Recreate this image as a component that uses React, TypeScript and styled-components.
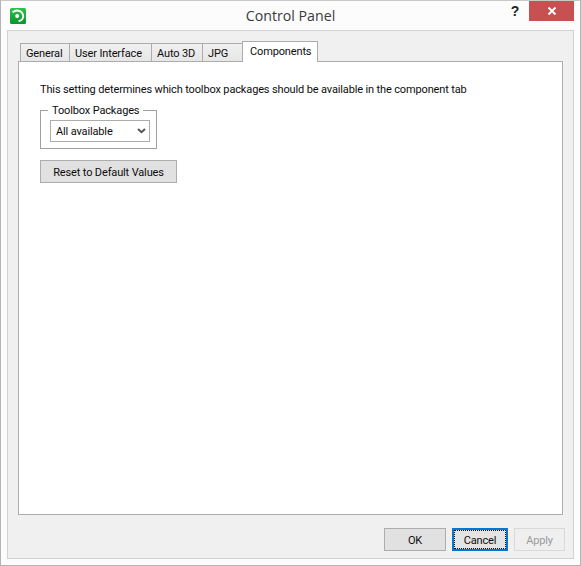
import React from 'react';
import styled, { createGlobalStyle } from 'styled-components';

const GlobalStyle = createGlobalStyle`
  html, body {
    margin: 0;
    padding: 0;
    background: #fcfcfc;
  }
  * {
    box-sizing: border-box;
  }
`;

const WindowFrame = styled.div`
  width: 581px;
  height: 566px;
  display: flex;
  flex-direction: column;
  background: #fcfcfc;
  border: 1px solid #b4b4b4;
  border-top-color: #c8c8c8;
  font-family: Roboto, "Open Sans", sans-serif;
  font-size: 11px;
  letter-spacing: -0.14px;
  color: #0d0d0d;
  overflow: hidden;
`;

const TitleBar = styled.div`
  height: 29px;
  flex: none;
  display: flex;
  align-items: flex-start;
  padding-left: 9px;
`;

const AppIcon = styled.svg`
  width: 16px;
  height: 16px;
  margin-top: 7px;
  flex: none;
`;

const Title = styled.div`
  flex: 1;
  text-align: center;
  font-family: "Open Sans", sans-serif;
  font-size: 14.2px;
  letter-spacing: 0;
  line-height: 20px;
  margin-top: 5px;
  padding-left: 48px;
  color: #3a3a3a;
`;

const HelpButton = styled.div`
  width: 16px;
  margin-right: 6px;
  margin-top: 1px;
  text-align: center;
  font-family: "Liberation Sans", sans-serif;
  font-weight: bold;
  font-size: 14px;
  line-height: 18px;
  color: #222;
`;

const CloseButton = styled.div`
  width: 45px;
  height: 20px;
  margin-right: 6px;
  background: #c75050;
  display: flex;
  align-items: center;
  justify-content: center;
`;

const Client = styled.div`
  flex: 1;
  margin: 0 6px 6px;
  background: #f0f0f0;
  border: 1px solid #d2d2d2;
  display: flex;
  flex-direction: column;
  padding: 8px 10px 0;
`;

const TabStrip = styled.div`
  display: flex;
  align-items: flex-end;
  height: 22px;
  padding-left: 3px;
  position: relative;
  z-index: 1;
`;

const Tab = styled.div<{ $width: number; $active?: boolean }>`
  width: ${p => p.$width}px;
  height: ${p => (p.$active ? 21 : 19)}px;
  margin-left: -1px;
  margin-bottom: -1px;
  display: flex;
  align-items: flex-start;
  padding: 1px 0 0 ${p => (p.$active ? 7 : 5)}px;
  line-height: 18px;
  background: ${p => (p.$active ? '#fff' : 'linear-gradient(#f0f0f0, #e6e6e6)')};
  border: 1px solid #acacac;
  border-bottom: ${p => (p.$active ? 'none' : '1px solid #acacac')};
  white-space: nowrap;
`;

const Pane = styled.div`
  height: 454px;
  background: #fff;
  border: 1px solid #acacac;
  padding: 20px 21px;
`;

const Description = styled.div`
  line-height: 16px;
  white-space: nowrap;
`;

const GroupBox = styled.fieldset`
  width: 117px;
  height: 46px;
  margin: 5px 0 0;
  padding: 0 9px;
  border: 1px solid #a0a0a0;
  min-inline-size: auto;
`;

const GroupLegend = styled.legend`
  padding: 0 4px;
  margin-left: -2px;
  line-height: 15px;
  white-space: nowrap;
`;

const SelectBox = styled.div`
  width: 100px;
  height: 22px;
  margin-top: 2px;
  border: 1px solid #acacac;
  background: #fff;
  display: flex;
  align-items: center;
  justify-content: space-between;
  padding: 0 3px 0 5px;
`;

const Button = styled.div<{ $width: number; $focused?: boolean; $disabled?: boolean }>`
  width: ${p => p.$width}px;
  height: 23px;
  display: flex;
  align-items: center;
  justify-content: center;
  padding-top: ${p => (p.$focused ? 0 : 2)}px;
  background: ${p => (p.$disabled ? '#efefef' : p.$focused ? '#e4e4e4' : '#e1e1e1')};
  border: ${p => (p.$focused ? '2px solid #0078d7' : `1px solid ${p.$disabled ? '#d9d9d9' : '#adadad'}`)};
  color: ${p => (p.$disabled ? '#9a9a9a' : '#0d0d0d')};
  white-space: nowrap;
`;

const FocusText = styled.span`
  display: flex;
  align-items: center;
  justify-content: center;
  width: 100%;
  height: 100%;
  padding-top: 2px;
  outline: 1px dotted #111;
  outline-offset: -1px;
`;

const ResetRow = styled.div`
  margin-top: 11px;
`;

const Footer = styled.div`
  display: flex;
  justify-content: flex-end;
  gap: 6px;
  padding: 13px 0 0;
  margin-right: -2px;
`;

export default function App() {
  return (
    <>
      <GlobalStyle />
      <WindowFrame>
        <TitleBar>
          <AppIcon viewBox="0 0 16 16">
            <defs>
              <linearGradient id="appGreen" x1="0" y1="0" x2="0" y2="1">
                <stop offset="0" stopColor="#2fc24a" />
                <stop offset="1" stopColor="#0a9430" />
              </linearGradient>
            </defs>
            <rect width="16" height="16" rx="1.5" fill="url(#appGreen)" />
            <path d="M2.6 4.4 C4.5 2.6 7.5 2.2 9.8 3.2 C13 4.6 14 8 12.6 10.6 C11.8 12 10.4 13 8.6 13.2" fill="none" stroke="#fff" strokeWidth="1.9" />
            <circle cx="7.2" cy="8" r="2" fill="#fff" />
          </AppIcon>
          <Title>Control Panel</Title>
          <HelpButton>?</HelpButton>
          <CloseButton>
            <svg width="10" height="8" viewBox="0 0 10 8">
              <path d="M1.5 0.5 L8.5 7.5 M8.5 0.5 L1.5 7.5" stroke="#fff" strokeWidth="2" />
            </svg>
          </CloseButton>
        </TitleBar>
        <Client>
          <TabStrip>
            <Tab $width={50}>General</Tab>
            <Tab $width={83}>User Interface</Tab>
            <Tab $width={52}>Auto 3D</Tab>
            <Tab $width={41}>JPG</Tab>
            <Tab $width={76} $active>Components</Tab>
          </TabStrip>
          <Pane>
            <Description>
              This setting determines which toolbox packages should be available in the component tab
            </Description>
            <GroupBox>
              <GroupLegend>Toolbox Packages</GroupLegend>
              <SelectBox>
                All available
                <svg width="9" height="6" viewBox="0 0 9 6">
                  <path d="M1 1 L4.5 4.2 L8 1" fill="none" stroke="#555" strokeWidth="2" />
                </svg>
              </SelectBox>
            </GroupBox>
            <ResetRow>
              <Button $width={137}>Reset to Default Values</Button>
            </ResetRow>
          </Pane>
          <Footer>
            <Button $width={62}>OK</Button>
            <Button $width={56} $focused><FocusText>Cancel</FocusText></Button>
            <Button $width={51} $disabled>Apply</Button>
          </Footer>
        </Client>
      </WindowFrame>
    </>
  );
}
